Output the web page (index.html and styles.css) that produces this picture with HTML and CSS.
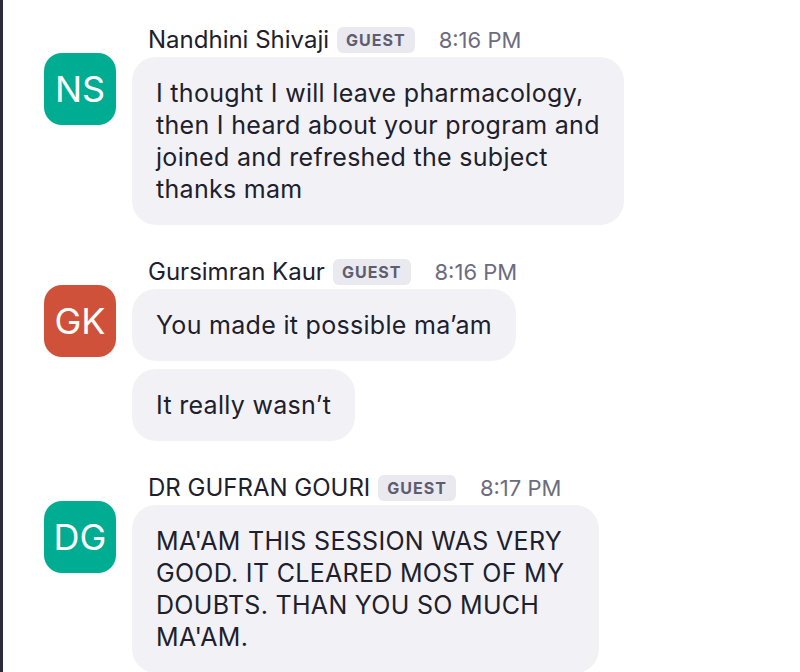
FILE: index.html
```html
<!DOCTYPE html>
<html lang="en">
<head>
    <meta charset="UTF-8">
    <meta name="viewport" content="width=device-width, initial-scale=1.0">
    <title>Chat</title>
    <link rel="stylesheet" href="styles.css">
</head>
<body>
    <div class="chat">
        <div class="message">
            <div class="avatar avatar-teal">NS</div>
            <div class="content">
                <div class="header">
                    <span class="name">Nandhini Shivaji</span>
                    <span class="badge">GUEST</span>
                    <span class="time">8:16 PM</span>
                </div>
                <div class="bubble">I thought I will leave pharmacology,<br>then I heard about your program and<br>joined and refreshed the subject<br>thanks mam</div>
            </div>
        </div>

        <div class="message">
            <div class="avatar avatar-red">GK</div>
            <div class="content">
                <div class="header">
                    <span class="name">Gursimran Kaur</span>
                    <span class="badge">GUEST</span>
                    <span class="time">8:16 PM</span>
                </div>
                <div class="bubble">You made it possible ma’am</div>
                <div class="bubble">It really wasn’t</div>
            </div>
        </div>

        <div class="message">
            <div class="avatar avatar-teal">DG</div>
            <div class="content">
                <div class="header">
                    <span class="name">DR GUFRAN GOURI</span>
                    <span class="badge">GUEST</span>
                    <span class="time">8:17 PM</span>
                </div>
                <div class="bubble bubble-wide">MA'AM THIS SESSION WAS VERY<br>GOOD. IT CLEARED MOST OF MY<br>DOUBTS. THAN YOU SO MUCH<br>MA'AM.</div>
            </div>
        </div>
    </div>
</body>
</html>
```

FILE: styles.css
```css
body {
    margin: 0;
    height: 672px;
    overflow: hidden;
    background: #ffffff;
    border-left: 3px solid #2b2b3a;
    font-family: Inter, "Noto Sans", sans-serif;
    color: #20202d;
}

.chat {
    padding: 27px 0 0 41px;
}

.message {
    display: flex;
    gap: 16px;
    margin-bottom: 34px;
}

.avatar {
    flex: 0 0 72px;
    height: 72px;
    margin-top: 26px;
    border-radius: 18px;
    color: #ffffff;
    font-size: 36px;
    display: flex;
    align-items: center;
    justify-content: center;
}

.avatar-teal {
    background-color: #00ad93;
}

.avatar-red {
    background-color: #d0513a;
}

.content {
    display: flex;
    flex-direction: column;
    align-items: flex-start;
    gap: 8px;
}

.header {
    display: flex;
    align-items: center;
    height: 26px;
    padding-left: 16px;
    margin-bottom: -4px;
}

.name {
    font-size: 24px;
    line-height: 26px;
}

.badge {
    margin-left: 8px;
    height: 26px;
    padding: 0 9px;
    border-radius: 6px;
    background-color: #e9e9ef;
    color: #5d5d70;
    font-size: 16px;
    font-weight: 700;
    letter-spacing: 1px;
    line-height: 26px;
}

.time {
    margin-left: 24px;
    font-size: 22px;
    color: #6c6c7e;
}

.bubble {
    background-color: #f2f2f6;
    border-radius: 24px;
    padding: 20px 24px;
    font-size: 25px;
    letter-spacing: 0.3px;
    line-height: 32px;
}

.bubble-wide {
    padding-right: 35px;
}
```
